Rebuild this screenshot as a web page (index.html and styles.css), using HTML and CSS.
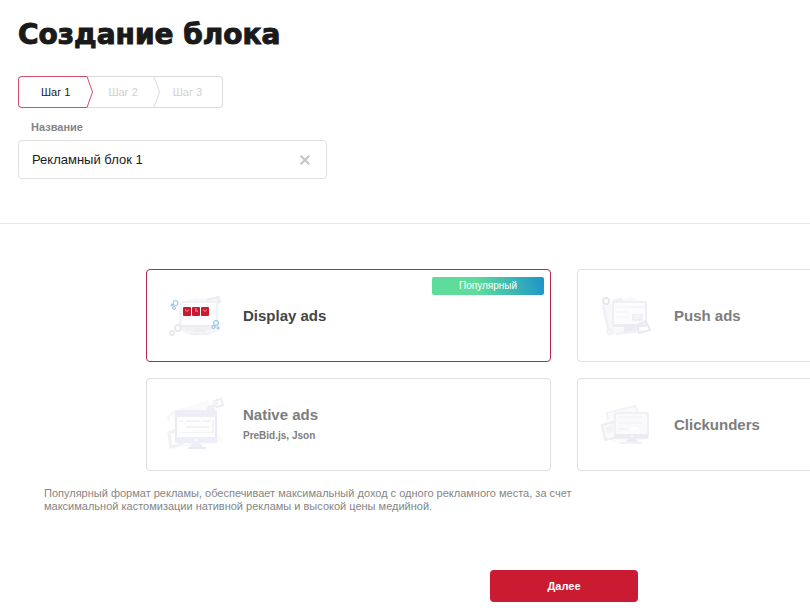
FILE: index.html
```html
<!DOCTYPE html>
<html lang="ru">
<head>
    <meta charset="utf-8">
    <meta name="viewport" content="width=device-width, initial-scale=1">
    <title>Создание блока</title>
    <link rel="stylesheet" href="styles.css">
</head>
<body>

<form class="page">
    <header class="top">
        <h1>Создание блока</h1>

        <div class="steps">
            <button type="button" class="step step-first active">Шаг 1</button>
            <svg class="arrow" width="8" height="32" viewBox="0 0 8 32" fill="none">
                <path d="M0 .5H8M0 31.5H8" stroke="#dcdcdc"/>
                <path class="arrow-active" d="M0 .5H1L6.500 16L1 31.500H0"/>
            </svg>
            <button type="button" class="step">Шаг 2</button>
            <svg class="arrow" width="8" height="32" viewBox="0 0 8 32" fill="none">
                <path d="M0 .5H8M0 31.5H8M1 .5L6.500 16L1 31.500" stroke="#dcdcdc"/>
            </svg>
            <button type="button" class="step step-last">Шаг 3</button>
        </div>

        <label class="field-label" for="blockName">Название</label>
        <div class="field">
            <input type="text" id="blockName" value="Рекламный блок 1">
            <button type="button" class="clear" aria-label="Очистить">
                <svg width="10" height="10" viewBox="0 0 10 10" fill="none" stroke="#c4c4c4" stroke-width="2">
                    <path d="M.7.7L9.300 9.300M9.300.7L.7 9.300"/>
                </svg>
            </button>
        </div>
    </header>

    <div class="formats">
        <label class="card">
            <input type="radio" name="format" value="display" checked>
            <svg class="card-icon" viewBox="0 0 66 56" fill="none">
                <path d="M14 15L30 10L41 12L54 7L56 14L50 18L55 42L42 47L20 46L12 39Z" fill="#f7f7f9"/>
                <path d="M40 12L52 9L53 14L48 17" stroke="#ececef" stroke-width="2"/>
                <rect x="15" y="14" width="36" height="26" rx="2" fill="#fdfdff" stroke="#f2f2f6" stroke-width="2"/>
                <path d="M15 37H51V39H15ZM29 40H38L40 44H27Z" fill="#ebebf1"/>
                <path d="M19 42L47 41M24 46H44" stroke="#f0f0f4" stroke-width="2"/>
                <g fill="#ca1a31">
                    <rect x="17" y="19" width="8" height="9" rx="1"/>
                    <rect x="26" y="19" width="8" height="9" rx="1"/>
                    <rect x="35" y="19" width="8" height="9" rx="1"/>
                </g>
                <path d="M19 22h1M22 22h1M20 23h2M29 21h2M29 23h3M37 22h1M40 22h1M38 23h2" stroke="#eb9aa5"/>
                <g stroke="#85bce3">
                    <circle cx="9.500" cy="15" r="2.500"/>
                    <circle cx="6" cy="17" r="1"/>
                    <circle cx="8" cy="20" r="1.500"/>
                    <circle cx="50" cy="35" r="2.500"/>
                    <circle cx="47.500" cy="39" r="1.500"/>
                    <circle cx="52" cy="40" r="1"/>
                </g>
                <g stroke="#e9e9ee" stroke-width="2">
                    <circle cx="12" cy="40" r="3"/>
                    <circle cx="6" cy="45" r="2"/>
                </g>
            </svg>
            <span class="card-text"><span class="card-title">Display ads</span></span>
            <span class="badge">Популярный</span>
        </label>

        <label class="card">
            <input type="radio" name="format" value="push">
            <svg class="card-icon" viewBox="0 0 66 56" fill="none">
                <path d="M7 18L33 9L42 12L44 42L13 47Z" fill="#f8f8fa"/>
                <path d="M6 17L12 44M16 13L25 11" stroke="#f1f1f5" stroke-width="3"/>
                <circle cx="9" cy="13" r="3" fill="#fff" stroke="#e7e7ec" stroke-width="2"/>
                <circle cx="13" cy="44" r="3" fill="#f3f3f7" stroke="#ededf2"/>
                <rect x="16" y="14" width="33" height="24" rx="1" fill="#fcfcfe" stroke="#efeff4" stroke-width="2"/>
                <path d="M16 36H49V39H16ZM28 39H38L40 44H26Z" fill="#ebebf3"/>
                <path d="M18 19H47M19 24H32M19 29H32" stroke="#f2f2f6"/>
                <path d="M35 26H46V33H35Z" fill="#f0f0f4"/>
                <path d="M37 28H44M37 30H42" stroke="#f8f8fb"/>
                <path d="M40 37L49 33L53 42L42 45Z" stroke="#e9e9ef" stroke-width="2"/>
                <path d="M19 46L44 43" stroke="#f0f0f6" stroke-width="2"/>
            </svg>
            <span class="card-text"><span class="card-title">Push ads</span></span>
        </label>

        <label class="card">
            <input type="radio" name="format" value="native">
            <svg class="card-icon" viewBox="0 0 66 56" fill="none">
                <path d="M6 14L43 3L50 36L57 43L51 46L15 50Z" fill="#fafafb"/>
                <path d="M3 24L2 20L9 15" stroke="#f6f6f8" stroke-width="2"/>
                <path d="M48 4L55 2L57 8L51 10Z" stroke="#efeff2" stroke-width="2"/>
                <circle cx="49" cy="7" r="3" fill="#f2f2f5"/>
                <path d="M3 36L11 33L16 47L5 50Z" stroke="#f1f1f5" stroke-width="3"/>
                <circle cx="45" cy="12" r="4" fill="#efeff9"/>
                <rect x="10" y="14" width="40" height="31" rx="1" fill="#fefeff" stroke="#ebebf7" stroke-width="2"/>
                <path d="M9 13H51V20H9ZM9 40H51V46H9ZM27 46H34L37 50H24Z" fill="#eeeef9"/>
                <path d="M14 23H17V25H14ZM20 23H34V25H20ZM37 23H44V25H37ZM20 29H43V31H20ZM15 35H46V36H15ZM46 23H48V36H46Z" fill="#f3f3f7"/>
                <circle cx="30" cy="43" r="1" fill="#fff"/>
                <path d="M22 51H40" stroke="#eaeaf2" stroke-width="2"/>
            </svg>
            <span class="card-text">
                <span class="card-title">Native ads</span>
                <span class="card-note">PreBid.js, Json</span>
            </span>
        </label>

        <label class="card">
            <input type="radio" name="format" value="clickunder">
            <svg class="card-icon" viewBox="0 0 66 56" fill="none">
                <path d="M9 19L37 8L43 18L50 42L23 47L10 41Z" fill="#fafafc"/>
                <path d="M11 22L10 16L38 9L41 15" stroke="#f3f3f6" stroke-width="2"/>
                <path d="M5 28L17 25L21 40L8 43Z" fill="#fafafc" stroke="#eeeef2" stroke-width="2"/>
                <path d="M9 30L15 28L17 34L11 36Z" fill="#f2f2f5"/>
                <rect x="18" y="16" width="33" height="25" rx="1" fill="#fafafc" stroke="#f1f1f5" stroke-width="2"/>
                <path d="M18 37H51V41H18ZM31 41H39L41 45H29Z" fill="#ebebf1"/>
                <path d="M21 20H45M21 26H45M21 32H31" stroke="#f0f0f4"/>
                <path d="M34 30H41V33H34Z" fill="#fff"/>
                <circle cx="35" cy="39" r="1" fill="#fff"/>
                <path d="M23 46H45" stroke="#f3f3f7" stroke-width="2"/>
            </svg>
            <span class="card-text"><span class="card-title">Clickunders</span></span>
        </label>
    </div>

    <p class="hint">Популярный формат рекламы, обеспечивает максимальный доход с одного рекламного места, за счет максимальной кастомизации нативной рекламы и высокой цены медийной.</p>

    <button type="button" class="next">Далее</button>
</form>

</body>
</html>
```

FILE: styles.css
```css
* {
    box-sizing: border-box;
}

html {
    overflow-x: hidden;
}

body {
    margin: 0;
    font-family: "Liberation Sans", Arial, sans-serif;
    color: #1a1a1a;
    background-color: #fff;
}

button, input {
    font-family: inherit;
}

.page {
    display: flex;
    flex-direction: column;
    min-width: 1128px;
}

.top {
    padding: 16px 18px 44px;
    border-bottom: 1px solid #e8e8e8;
}

h1 {
    margin: 0 0 22px;
    font-family: "Arial Black", "DejaVu Sans", sans-serif;
    font-size: 28px;
    line-height: 38px;
    font-weight: 900;
    -webkit-text-stroke: 1px #1a1a1a;
}

.steps {
    display: flex;
    height: 32px;
    margin-bottom: 12px;
}

.step {
    padding: 0 15px 0 14px;
    border: solid #dcdcdc;
    border-width: 1px 0;
    background: none;
    color: #cfcfcf;
    font-size: 11px;
    cursor: pointer;
}

.step-first {
    padding: 0 16px 0 22px;
    border-left-width: 1px;
    border-radius: 4px 0 0 4px;
}

.step-last {
    padding: 0 20px 0 12px;
    border-right-width: 1px;
    border-radius: 0 4px 4px 0;
}

.step.active {
    border-color: #d0526a;
    color: #1a1a1a;
}

.arrow-active {
    stroke: #d0526a;
}

.field-label {
    display: block;
    padding-left: 13px;
    margin-bottom: 6px;
    font-size: 11px;
    line-height: 14px;
    font-weight: bold;
    color: #858585;
}

.field {
    display: flex;
    align-items: center;
    width: 309px;
    height: 39px;
    padding: 0 11px 0 13px;
    border: 1px solid #e0e0e0;
    border-radius: 4px;
}

.field input {
    flex: 1;
    min-width: 0;
    padding: 0;
    border: none;
    outline: none;
    font-size: 13px;
    color: #1a1a1a;
}

.clear {
    display: flex;
    padding: 5px;
    border: none;
    background: none;
    cursor: pointer;
}

.formats {
    display: grid;
    grid-template-columns: 405px 405px;
    justify-content: center;
    gap: 16px 26px;
    padding-top: 45px;
}

.card {
    position: relative;
    display: flex;
    align-items: center;
    gap: 11px;
    height: 93px;
    padding-left: 19px;
    border: 1px solid #e0e0e0;
    border-radius: 4px;
    color: #7d7d7d;
    cursor: pointer;
}

.card:has(input:checked) {
    border-color: #b3274a;
    color: #454545;
}

.card input {
    position: absolute;
    opacity: 0;
}

.card-icon {
    width: 66px;
    height: 56px;
}

.card-text {
    display: flex;
    flex-direction: column;
    gap: 4px;
    font-weight: bold;
}

.card-title {
    font-size: 15px;
    line-height: 18px;
}

.card-note {
    font-size: 10px;
    line-height: 16px;
}

.badge {
    position: absolute;
    top: 7px;
    right: 6px;
    width: 112px;
    border-radius: 2px;
    background: linear-gradient(75deg, #5ddc9b 40%, #1c94ca);
    color: #fff;
    font-size: 10px;
    line-height: 18px;
    text-align: center;
}

.hint {
    max-width: 590px;
    margin: 16px 0 57px;
    padding: 0 10px 0 44px;
    font-size: 11px;
    line-height: 13px;
    color: #858585;
}

.next {
    align-self: center;
    width: 148px;
    height: 32px;
    margin-bottom: 9px;
    border: none;
    border-radius: 4px;
    background-color: #ca1b32;
    color: #fff;
    font-size: 11px;
    font-weight: bold;
    cursor: pointer;
}
```
